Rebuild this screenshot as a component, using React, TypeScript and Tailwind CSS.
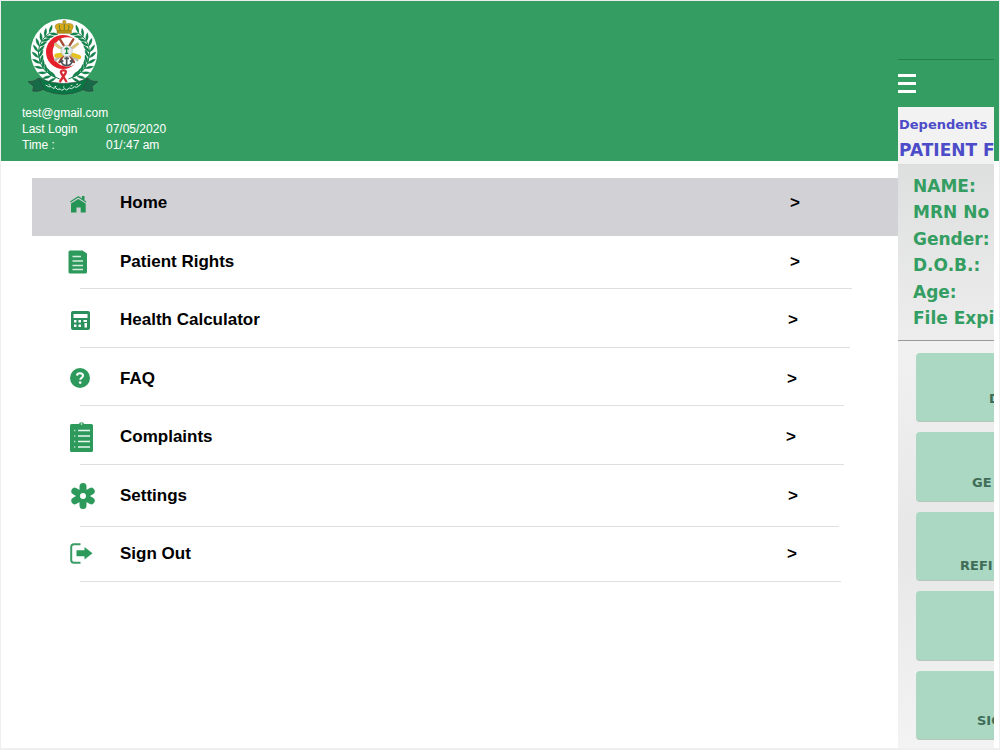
import type { ReactNode } from "react";

type MenuItem = {
  label: string;
  icon: ReactNode;
  row: string;
  divider?: string;
};

function HomeIcon() {
  return (
    <svg width="17" height="20" viewBox="0 -2 17 20" fill="#249555" aria-hidden="true">
      <path d="M0 6.6 8.3 1l3.6 2.4V1h2.6v4.2l2 1.4-.6.9L8.3 2.6.6 7.5z" />
      <path d="m1 8.6 7.3-4.7 7.4 4.7V17.5h-5v-5H6.5v5H1z" />
    </svg>
  );
}

function DocumentIcon() {
  return (
    <svg className="-ml-0.5" width="19" height="24" viewBox="0 0 19 24" aria-hidden="true">
      <path d="M2 .5h12.5l4.5 3V22a1.5 1.5 0 0 1-1.5 1.5H2A1.5 1.5 0 0 1 .5 22V2A1.5 1.5 0 0 1 2 .5z" fill="#2d9a5c" />
      <path d="M4.500 6.500H13M4.500 11H15M4.500 15.500H15M4.500 19.500H15" stroke="#d5eddf" strokeWidth="1.300" />
    </svg>
  );
}

function CalculatorIcon() {
  return (
    <svg className="ml-px" width="19" height="19" viewBox="0 0 19 19" aria-hidden="true">
      <rect width="19" height="19" rx="2" fill="#2a8f5b" />
      <path
        d="M2.5 3h14v4h-14zM3 9h2.500v2.500H3zM7.500 9H10v2.500H7.500zM12.500 9H16v2H12.500zM3 13.500h2.500V16H3zM7.500 13.500H10V16H7.500zM13.500 12H16v4.500H13.500z"
        fill="#fff"
      />
    </svg>
  );
}

function HelpIcon() {
  return (
    <svg width="20" height="22" viewBox="0 0 20 22" aria-hidden="true">
      <circle cx="10" cy="10" r="10" fill="#2d9a5c" />
      <path d="M7 7.600c.2-3.200 6-3.100 6 .2 0 2-2.700 2-2.700 4" fill="none" stroke="#fff" strokeWidth="2" />
      <circle cx="10.200" cy="14.600" r="1.300" fill="#fff" />
    </svg>
  );
}

function ClipboardIcon() {
  return (
    <svg width="23" height="30" viewBox="0 0 23 30" aria-hidden="true">
      <path d="M1.500 2H8q1.500 0 1.800-1.500h3.400Q13.500 2 15 2h6.500A1.500 1.500 0 0 1 23 3.500v25a1.500 1.500 0 0 1-1.500 1.500h-20A1.500 1.500 0 0 1 0 28.500v-25A1.500 1.500 0 0 1 1.500 2z" fill="#2d9a5c" />
      <circle cx="11.500" cy="2" r=".8" fill="#fff" />
      <path d="M8 8.500h12M8 14h12M8 19.500h12M8 25h12" stroke="#e9f6ee" strokeWidth="1.700" />
      <path d="M4 8.500h1.300M4 14h1.300M4 19.500h1.300M4 25h1.300" stroke="#b9dfc8" strokeWidth="1.500" />
    </svg>
  );
}

function FlowerIcon() {
  return (
    <svg className="ml-px" width="24" height="26" viewBox="0 0 24 26" aria-hidden="true">
      <path d="M12 3.500v19M3.800 8.200l16.400 9.600M20.200 8.200 3.800 17.800" stroke="#2d9a5c" strokeWidth="7" strokeLinecap="round" />
      <circle cx="12" cy="13" r="7" fill="#2d9a5c" />
      <circle cx="12" cy="13" r="3" fill="#fff" />
    </svg>
  );
}

function SignOutIcon() {
  return (
    <svg width="23" height="23" viewBox="0 0 23 23" aria-hidden="true">
      <path d="M10.500 1.200H4Q1.200 1.200 1.200 4v13q0 2.800 2.800 2.800h6.500" fill="none" stroke="#3a9d66" strokeWidth="2" />
      <path d="M6.500 7.200h8V4l8 6.200-8 6.200v-3.200h-8z" fill="#2d9a5c" />
    </svg>
  );
}

const menu: MenuItem[] = [
  { label: "Home", icon: <HomeIcon />, row: "h-[58px] pr-[98px] pb-2 bg-[#d2d1d6]" },
  { label: "Patient Rights", icon: <DocumentIcon />, row: "h-[52px] pr-[98px]", divider: "mr-[46px]" },
  { label: "Health Calculator", icon: <CalculatorIcon />, row: "h-[58px] pr-[100px] pt-1", divider: "mr-12" },
  { label: "FAQ", icon: <HelpIcon />, row: "h-[57px] pr-[101px] pt-1", divider: "mr-[54px]" },
  { label: "Complaints", icon: <ClipboardIcon />, row: "h-[58px] pr-[102px] pt-1", divider: "mr-[54px]" },
  { label: "Settings", icon: <FlowerIcon />, row: "h-[61px] pr-[100px]", divider: "mr-[59px]" },
  { label: "Sign Out", icon: <SignOutIcon />, row: "h-[54px] pr-[101px]", divider: "mr-[57px]" },
];

const details = ["NAME:", "MRN No", "Gender:", "D.O.B.:", "Age:", "File Expi"];

const tiles = [
  { id: "first", label: "D", pad: "pl-[73px] pb-3" },
  { id: "second", label: "GE", pad: "pl-14 pb-2" },
  { id: "third", label: "REFI", pad: "pl-11 pb-1" },
  { id: "fourth", label: "", pad: "" },
  { id: "fifth", label: "SIG", pad: "pl-[61px] pb-2" },
];

// leaves of one half of the wreath, from the bottom up: x, y, stem angle
const leaves = [
  [122, 203, 190],
  [108, 197, 204],
  [95, 187, 218],
  [84, 174, 232],
  [76, 159, 247],
  [71, 142, 260],
  [70, 125, 274],
  [73, 108, 288],
  [80, 93, 302],
  [90, 80, 316],
  [103, 69, 328],
];

function WreathHalf() {
  return (
    <g fill="#12804a" stroke="#12804a" strokeWidth="1">
      {leaves.map(([x, y, angle]) => (
        <g key={angle} transform={`translate(${x} ${y}) rotate(${angle})`}>
          <path d="M0 0Q4-13 20-17 17-5 0 0z" />
          <path d="M0 0Q4 13 20 17 17 5 0 0z" />
        </g>
      ))}
      <path d="M134 206Q72 188 70 128 72 88 103 69" fill="none" strokeWidth="3" />
    </g>
  );
}

function Crest() {
  return (
    <svg width="72" height="78" viewBox="36 20 216 234" role="img" aria-label="Medical services crest">
      <circle cx="147" cy="126" r="100" fill="#fff" />
      <WreathHalf />
      <g transform="translate(294 0) scale(-1 1)">
        <WreathHalf />
      </g>
      <circle cx="144" cy="125" r="51" fill="#e5202b" />
      <circle cx="157" cy="125" r="44" fill="#fff" />
      <g strokeLinecap="round" fill="none">
        <path d="m135 87 42 68M175 87l-42 68" stroke="#a34d32" strokeWidth="7" />
        <path d="m121 101 66 48M187 101l-66 48" stroke="#b9b9b4" strokeWidth="8" />
        <path d="m124 136 14-2M175 134l17 6" stroke="#e4c021" strokeWidth="13" />
        <path d="m122 103 12 9M188 101l-13 10" stroke="#dfc77a" strokeWidth="8" />
      </g>
      <circle cx="155" cy="122" r="17" fill="#e8eceb" stroke="#aab5b0" strokeWidth="2" />
      <path d="M155 114v14M149 117q6-8 12 0M150 129h10" stroke="#168149" strokeWidth="4" fill="none" />
      <path d="M155 139v27M148 144h14M138 151q4 15 17 15t17-15M136 157l3-8 6 5M174 157l-3-8-6 5" fill="none" stroke="#50545a" strokeWidth="5" />
      <g fill="#d9a916" stroke="#80701b" strokeWidth="1.500">
        <path d="M127 62q-14-18 2-22 8-1 19 1 11-2 19-1 15 4 1 22z" />
        <path d="M126 61h43v8h-43z" fill="#b79313" />
        <circle cx="148" cy="35" r="5" />
      </g>
      <path d="M134 44q-3 8 2 16M161 44q3 8-2 16M148 42v18" stroke="#5b8138" strokeWidth="3" fill="none" />
      <path d="M39 214q16 2 33-11l16 33q-17 10-35 6l3-14zM248 214q-16 2-33-11l-16 33q17 10 35 6l-3-14z" fill="#176b49" stroke="#373f3b" strokeWidth="2" />
      <path d="M72 204q74 31 148 0l-19 36q-54 24-113 0z" fill="#087744" stroke="#344b40" strokeWidth="2" />
      <path d="m134 215 18-27q3-9-8-8-9 1-5 9l16 26" stroke="#d82c35" strokeWidth="7" fill="none" />
      <path d="M92 224q10 8 17 5l5 5 8-2 5 5 9-1 4 4 9-5 6 4 8-6 7 2 8-6 7 2 12-9" stroke="#e5f3eb" strokeWidth="3" fill="none" />
      <path d="m101 223 5 2m13 3 5 1m20 1 4 0m19-3 5-2m12-2 5-2" stroke="#e5f3eb" strokeWidth="3" />
    </svg>
  );
}

function Drawer() {
  return (
    <div className="min-w-0 flex-1">
      <header className="h-40 bg-[#349e62] pt-4 pl-[21px] text-xs leading-4 text-white">
        <div className="ml-[5px] h-[88px]">
          <Crest />
        </div>
        <p>test@gmail.com</p>
        <dl className="grid grid-cols-[84px_1fr]">
          <dt>Last Login</dt>
          <dd>07/05/2020</dd>
          <dt>Time :</dt>
          <dd>01/:47 am</dd>
        </dl>
      </header>
      <nav className="pt-[17px]" aria-label="Main menu">
        <ul>
          {menu.map((item) => (
            <li key={item.label}>
              <div className="pl-[31px]">
                <button
                  type="button"
                  className={`flex w-full items-center pl-[38px] text-left text-[17px] leading-6 font-bold text-black ${item.row}`}
                >
                  <span className="w-[50px]">{item.icon}</span>
                  <span className="flex-1">{item.label}</span>
                  <span aria-hidden="true">&gt;</span>
                </button>
              </div>
              {item.divider ? <hr className={`ml-[79px] border-[#dfdfdf] ${item.divider}`} /> : null}
            </li>
          ))}
        </ul>
      </nav>
    </div>
  );
}

function PatientPeek() {
  return (
    <main className="flex w-24 flex-col overflow-hidden font-['DejaVu_Sans',sans-serif] font-bold whitespace-nowrap">
      <div className="flex h-[106px] flex-col bg-[#349e62] pt-[58px]">
        <hr className="border-[#287d4c]" />
        <button type="button" aria-label="Open menu" className="mt-[14px] flex w-[18px] flex-col gap-[5px]">
          <span className="h-[3px] w-full bg-white" />
          <span className="h-[3px] w-full bg-white" />
          <span className="h-[3px] w-full bg-white" />
        </button>
      </div>
      <div className="h-[58px] border-b border-[#dcdcdc] bg-[#f1f2f1] pt-2 pl-px text-[#4c4bc8]">
        <h2 className="text-[13px] leading-5">Dependents</h2>
        <h1 className="text-[17px] leading-[30px]">PATIENT F</h1>
      </div>
      <dl className="flex h-[176px] flex-col justify-between border-b border-[#999] bg-linear-to-b from-[#dedfdf] to-[#ededed] pt-2 pb-[9px] pl-[15px] text-[17px] leading-[26px] text-[#349e62]">
        {details.map((detail) => (
          <dt key={detail}>{detail}</dt>
        ))}
      </dl>
      <div className="flex flex-1 flex-col gap-2.5 bg-linear-to-b from-[#f1f1f1] via-[#e7e7e7] to-[#f3f3f3] pt-3 pb-2 pl-[18px]">
        {tiles.map((tile) => (
          <button
            key={tile.id}
            type="button"
            aria-label={tile.label ? undefined : "Service"}
            className="flex flex-1 items-end overflow-hidden rounded-l border-b border-[#b5c6bc] bg-[#abd8c2] text-[13px] leading-5 text-[#3f6d58]"
          >
            <span className={tile.pad}>{tile.label}</span>
          </button>
        ))}
      </div>
    </main>
  );
}

export default function App() {
  return (
    <div className="flex min-h-screen border border-b-2 border-[#efefef] bg-white font-['Liberation_Sans',Arial,sans-serif]">
      <Drawer />
      <PatientPeek />
      <div className="w-[5px]">
        <div className="h-40 bg-[#349e62]" />
      </div>
    </div>
  );
}
